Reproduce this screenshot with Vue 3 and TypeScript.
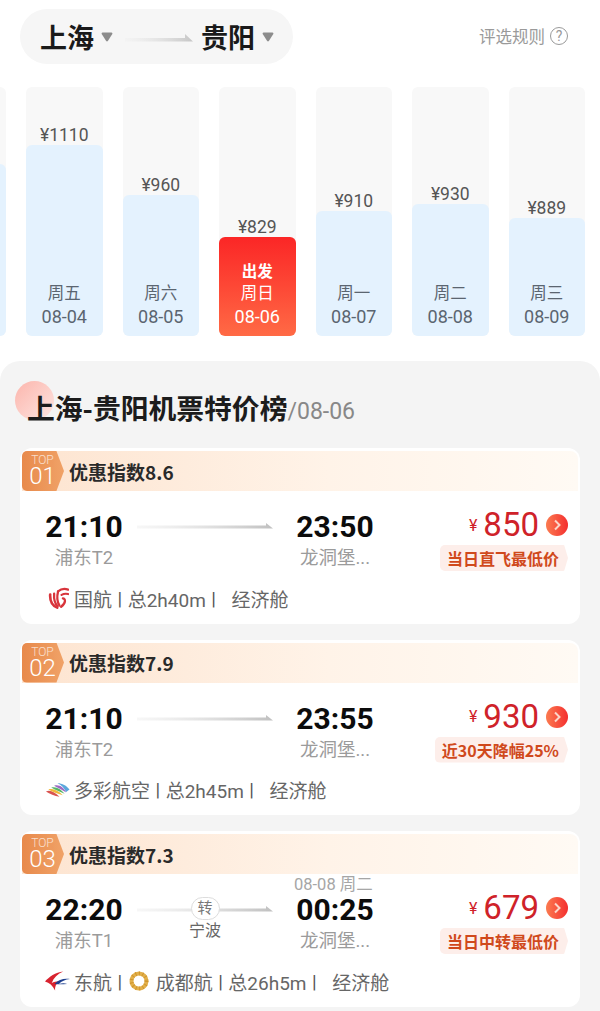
<template>
  <div class="page">
    <!-- 顶部航线 -->
    <header class="top">
      <div class="route">
        <span class="city">上海</span>
        <svg class="caret" viewBox="0 0 12 10"><path d="M1.5 0.5h9q1.4 0 .8 1.5L7 8.8q-1 1.2-2 0L.7 2Q.1.5 1.5.5z" /></svg>
        <svg class="route-arrow" viewBox="0 0 68 8">
          <defs>
            <linearGradient id="routeLine" x1="0" x2="1" y1="0" y2="0">
              <stop offset="0" stop-color="#e8e8e8" stop-opacity="0.2" />
              <stop offset="1" stop-color="#c6c6c6" />
            </linearGradient>
          </defs>
          <path d="M0 4h60V0l8 7.500H0z" fill="url(#routeLine)" />
        </svg>
        <span class="city">贵阳</span>
        <svg class="caret" viewBox="0 0 12 10"><path d="M1.5 0.5h9q1.4 0 .8 1.5L7 8.8q-1 1.2-2 0L.7 2Q.1.5 1.5.5z" /></svg>
      </div>
      <div class="rules">
        <span>评选规则</span>
        <span class="help">?</span>
      </div>
    </header>

    <!-- 日期价格柱状图 -->
    <section class="chart">
      <div v-for="day in days" :key="day.date" class="col">
        <div v-if="day.price" class="price">{{ day.price }}</div>
        <div :class="['bar', { active: day.active }]" :style="{ height: day.height + 'px' }">
          <template v-if="day.week">
            <div v-if="day.active" class="depart">出发</div>
            <div>{{ day.week }}</div>
            <div class="date">{{ day.date }}</div>
          </template>
        </div>
      </div>
    </section>

    <!-- 特价榜 -->
    <section class="panel">
      <span class="dot"></span>
      <h2 class="title">上海-贵阳机票特价榜<span class="title-date">/08-06</span></h2>

      <div class="list">
        <article v-for="item in flights" :key="item.rank" class="card">
          <div class="band">
            <div class="rank">
              <span class="rank-top">TOP</span>
              <span class="rank-num">{{ item.rank }}</span>
            </div>
            <span class="score">优惠指数{{ item.score }}</span>
          </div>

          <div class="main">
            <div class="point">
              <div class="time">{{ item.from }}</div>
              <div class="port">{{ item.fromPort }}</div>
            </div>
            <div class="line">
              <svg class="line-arrow" viewBox="0 0 136 6">
                <defs>
                  <linearGradient :id="'line' + item.rank" x1="0" x2="1" y1="0" y2="0">
                    <stop offset="0" stop-color="#e4e4e4" stop-opacity="0.3" />
                    <stop offset="1" stop-color="#c0c0c0" />
                  </linearGradient>
                </defs>
                <path d="M0 2.500h129V0l7 5.500H0z" :fill="'url(#line' + item.rank + ')'" />
              </svg>
              <template v-if="item.transfer">
                <span class="transfer">转</span>
                <span class="transfer-city">{{ item.transfer }}</span>
              </template>
            </div>
            <div class="point arrive">
              <div v-if="item.nextDay" class="next-day">{{ item.nextDay }}</div>
              <div class="time">{{ item.to }}</div>
              <div class="port">龙洞堡...</div>
            </div>
            <div class="offer">
              <div class="amount">
                <span class="yen">¥</span>
                <span class="value">{{ item.price }}</span>
                <span class="go">
                  <svg viewBox="0 0 22 22"><path d="M9 6.500l4.500 4.500L9 15.500" /></svg>
                </span>
              </div>
              <div class="tag">{{ item.tag }}</div>
            </div>
          </div>

          <div class="meta">
            <svg v-if="item.logo === 'ca'" class="logo ca" viewBox="0 0 24 24">
              <g fill="none" stroke="#d8353c" stroke-linecap="round">
                <path d="M2.500 8c-.5 8 2 12.500 8 15" stroke-width="3" />
                <path d="M7 7c-.5 7 .5 11 4 14.500" stroke-width="2.600" />
                <path d="M11.500 4.500c-1.500 6-1.500 11 1.500 16" stroke-width="2.600" />
                <path d="M11.500 4.500C15 1.500 19 1 23 2.500" stroke-width="2.600" />
                <path d="M15.500 8.500c2.500-1.500 5-1.800 7.500-1" stroke-width="2.400" />
                <path d="M17 12.500c3 0 4 5-2 9.500" stroke-width="2.600" />
              </g>
            </svg>
            <svg v-if="item.logo === 'dc'" class="logo wide" viewBox="0 0 26 16">
              <path d="M1 9.500c5-2 9 1 14 5.500C10 14 5 12 1 9.500z" fill="#d9534f" />
              <path d="M3.500 7.500c5-1.500 10 1 15 6C13 12 8 10 3.500 7.500z" fill="#f0b93a" />
              <path d="M6.500 5.500c5-1.500 10 1.500 14 6.500-5-2-10-4-14-6.500z" fill="#56b56a" />
              <path d="M9.500 3.500c5-1.500 10 1.500 12.500 7C18 8 14 6 9.500 3.500z" fill="#9d6bc4" />
              <path d="M13 1c5 0 9.500 2.500 12.500 6.500L22 10C20 6 17 3 13 1z" fill="#5aa7dc" />
            </svg>
            <svg v-if="item.logo === 'mu'" class="logo wide mu" viewBox="0 0 26 22">
              <path d="M19 1C11 2 4 6.500 0 11.500c4.500 1 8 4.500 10.500 9.500-.5-4 1-7 4-9.500-3 0-5.500.3-7.500 1.500C9 7.500 13 3.500 19 1z" fill="#d8232f" />
              <path d="M10 14c4-4.500 10-6 16-5-5 .5-9 2.500-11.500 5 3-1 6-1 8.500 0-5 .5-9.500.5-13 0z" fill="#1d3f8f" />
            </svg>
            <span>{{ item.airline }}</span>
            <template v-if="item.partner">
              <span class="sep">|</span>
              <svg class="logo ring" viewBox="0 0 20 20">
                <circle cx="10" cy="10" r="7.500" fill="none" stroke="#e2b04a" stroke-width="4" />
                <circle cx="10" cy="10" r="7.500" fill="none" stroke="#d0952c" stroke-width="4" stroke-dasharray="1 2.500" />
              </svg>
              <span>{{ item.partner }}</span>
            </template>
            <span class="sep">|</span>
            <span>总{{ item.duration }}</span>
            <span class="sep">|</span>
            <span class="cabin">经济舱</span>
          </div>
        </article>
      </div>
    </section>
  </div>
</template>

<script setup lang="ts">
interface Day {
  price?: string
  week?: string
  date: string
  height: number
  active?: boolean
}

interface Flight {
  rank: string
  score: string
  from: string
  fromPort: string
  to: string
  nextDay?: string
  transfer?: string
  price: number
  tag: string
  logo: 'ca' | 'dc' | 'mu'
  airline: string
  partner?: string
  duration: string
}

// 最左一列只露出一条边，不显示文字
const days: Day[] = [
  { date: '08-03', height: 172 },
  { price: '¥1110', week: '周五', date: '08-04', height: 191 },
  { price: '¥960', week: '周六', date: '08-05', height: 141 },
  { price: '¥829', week: '周日', date: '08-06', height: 99, active: true },
  { price: '¥910', week: '周一', date: '08-07', height: 125 },
  { price: '¥930', week: '周二', date: '08-08', height: 132 },
  { price: '¥889', week: '周三', date: '08-09', height: 118 }
]

const flights: Flight[] = [
  {
    rank: '01',
    score: '8.6',
    from: '21:10',
    fromPort: '浦东T2',
    to: '23:50',
    price: 850,
    tag: '当日直飞最低价',
    logo: 'ca',
    airline: '国航',
    duration: '2h40m'
  },
  {
    rank: '02',
    score: '7.9',
    from: '21:10',
    fromPort: '浦东T2',
    to: '23:55',
    price: 930,
    tag: '近30天降幅25%',
    logo: 'dc',
    airline: '多彩航空',
    duration: '2h45m'
  },
  {
    rank: '03',
    score: '7.3',
    from: '22:20',
    fromPort: '浦东T1',
    to: '00:25',
    nextDay: '08-08 周二',
    transfer: '宁波',
    price: 679,
    tag: '当日中转最低价',
    logo: 'mu',
    airline: '东航',
    partner: '成都航',
    duration: '26h5m'
  }
]
</script>

<style>
html,
body {
  background: #fff;
}
</style>

<style scoped>
.page {
  width: 600px;
  height: 1011px;
  overflow: hidden;
  background: #fff;
  font-family: "Roboto", "Noto Sans CJK SC", sans-serif;
  color: #222;
}

.top {
  display: flex;
  align-items: center;
  justify-content: space-between;
  padding: 9px 32px 0 20px;
  height: 55px;
}

.route {
  display: flex;
  align-items: center;
  width: 273px;
  height: 55px;
  box-sizing: border-box;
  padding-left: 20px;
  border-radius: 28px;
  background: #f6f6f6;
}

.city {
  font-family: "Noto Sans CJK SC", sans-serif;
  font-size: 27px;
  font-weight: 700;
  line-height: 55px;
  color: #1a1a1a;
}

.caret {
  width: 12px;
  height: 10px;
  margin-left: 7px;
  fill: #8c8c8c;
}

.route-arrow {
  width: 68px;
  height: 8px;
  margin: 3px 8px 0 12px;
}

.rules {
  display: flex;
  align-items: center;
  gap: 5px;
  margin-top: -1px;
  font-size: 16.500px;
  color: #9a9a9a;
}

.help {
  display: flex;
  align-items: center;
  justify-content: center;
  width: 16px;
  height: 16px;
  border: 1px solid #9a9a9a;
  border-radius: 50%;
  font-size: 14px;
  line-height: 1;
}

.chart {
  display: flex;
  gap: 20px;
  height: 249px;
  margin: 23px 0 0 -70.500px;
}

.col {
  display: flex;
  flex: 0 0 76.500px;
  flex-direction: column;
  justify-content: flex-end;
  border-radius: 6px;
  background: #f8f8f8;
}

.price {
  margin-bottom: -2px;
  font-size: 17.500px;
  line-height: 24px;
  text-align: center;
  color: #555;
}

.bar {
  display: flex;
  flex-direction: column;
  justify-content: flex-end;
  flex: none;
  box-sizing: border-box;
  padding-bottom: 8px;
  border-radius: 6px;
  background: #e4f2fe;
  font-size: 16.500px;
  line-height: 22px;
  text-align: center;
  color: #5b6570;
}

.bar.active {
  background: linear-gradient(180deg, #fb2626, #ff6a45);
  color: #fff;
}

.date {
  font-size: 18px;
  line-height: 23px;
}

.depart {
  font-size: 15.500px;
  font-weight: 700;
}

.panel {
  position: relative;
  height: 660px;
  margin-top: 25px;
  border-radius: 20px 20px 0 0;
  background: #f4f4f4;
}

.dot {
  position: absolute;
  top: 20px;
  left: 15px;
  width: 39px;
  height: 39px;
  border-radius: 50%;
  background: linear-gradient(135deg, #fcb5ac, #fde6e2);
}

.title {
  position: relative;
  margin: 0;
  padding: 24px 0 0 27px;
  font-family: "Noto Sans CJK SC", sans-serif;
  font-size: 27.800px;
  font-weight: 700;
  line-height: 44px;
  color: #1c1c1c;
}

.title-date {
  font-family: "Roboto", sans-serif;
  font-size: 23px;
  font-weight: 400;
  color: #888;
}

.list {
  display: flex;
  flex-direction: column;
  gap: 16px;
  margin: 14px 20px 0;
}

.card {
  height: 175.500px;
  box-sizing: border-box;
  padding: 3px 2px 0;
  border-radius: 12px;
  background: #fff;
}

.band {
  display: flex;
  align-items: center;
  height: 40px;
  border-radius: 8px 8px 0 0;
  background: linear-gradient(90deg, #fde4d0, #fff3e8 55%, #fffaf4);
}

.rank {
  display: flex;
  flex-direction: column;
  align-items: center;
  justify-content: center;
  box-sizing: border-box;
  width: 42px;
  height: 40px;
  padding-right: 1px;
  border-radius: 5px 0 0 5px;
  background: linear-gradient(90deg, #e88a4c, #f0a267);
  clip-path: polygon(0 0, 82% 0, 100% 50%, 82% 100%, 0 100%);
  color: #fff;
}

.rank-top {
  font-size: 12px;
  font-weight: 300;
  line-height: 11px;
  opacity: 0.7;
}

.rank-num {
  font-size: 24px;
  font-weight: 300;
  line-height: 21px;
}

.score {
  margin-left: 5px;
  font-family: "Noto Sans CJK SC", sans-serif;
  font-size: 19px;
  font-weight: 700;
  color: #2a2a2a;
}

.main {
  display: flex;
  height: 91px;
  padding-left: 23px;
}

.point {
  position: relative;
  flex: 0 0 78px;
  padding-top: 17px;
  text-align: center;
}

.time {
  font-size: 30px;
  font-weight: 700;
  line-height: 38px;
  color: #0c0c0c;
}

.port {
  font-size: 18.500px;
  line-height: 24px;
  color: #9b9b9b;
}

.line {
  position: relative;
  display: flex;
  flex: 0 0 136px;
  flex-direction: column;
  align-items: center;
  margin: 0 23px 0 14px;
  padding-top: 23px;
}

.line-arrow {
  position: absolute;
  top: 32px;
  left: 0;
  width: 136px;
  height: 6px;
}

.transfer {
  position: relative;
  box-sizing: border-box;
  width: 29px;
  height: 23px;
  border: 1px solid #ddd;
  border-radius: 12px;
  background: #fff;
  font-size: 15px;
  line-height: 21px;
  text-align: center;
  color: #777;
}

.transfer-city {
  font-size: 16px;
  line-height: 22px;
  color: #666;
}

.next-day {
  position: absolute;
  top: 1px;
  left: -2px;
  font-size: 16.500px;
  line-height: 20px;
  white-space: nowrap;
  color: #a6a6a6;
}

.offer {
  display: flex;
  flex: 1;
  flex-direction: column;
  align-items: flex-end;
  padding: 14px 10px 0 0;
}

.amount {
  display: flex;
  align-items: center;
  height: 40px;
}

.yen {
  margin-right: 6px;
  font-size: 16px;
  color: #cf2229;
}

.value {
  font-size: 33px;
  line-height: 40px;
  color: #cf2229;
}

.go {
  display: flex;
  width: 22px;
  height: 22px;
  margin-left: 7px;
  border-radius: 50%;
  background: linear-gradient(90deg, #fb7b50, #f42f2f);
}

.go svg {
  width: 22px;
  height: 22px;
  fill: none;
  stroke: #fbd6c8;
  stroke-width: 2;
}

.tag {
  height: 26px;
  padding: 0 9px 0 7px;
  border-radius: 5px;
  background: #fdeeea;
  clip-path: polygon(0 0, 97% 0, 100% 50%, 97% 100%, 0 100%);
  font-family: "Noto Sans CJK SC", sans-serif;
  font-size: 16px;
  font-weight: 700;
  line-height: 26px;
  color: #d0491c;
}

.meta {
  display: flex;
  align-items: center;
  height: 26px;
  margin-top: 3px;
  padding-left: 23px;
  font-size: 19px;
  color: #666;
}

.logo {
  flex: none;
  width: 24px;
  height: 22px;
  margin-right: 5px;
}

.logo.ca {
  width: 21px;
  margin-left: 3px;
  margin-right: 5px;
}

.logo.ring {
  width: 20px;
  height: 20px;
  margin: 0 7px 0 1px;
}

.logo.wide {
  width: 25px;
  margin-right: 4px;
}

.sep {
  margin: 0 5.500px;
  color: #555;
}

.cabin {
  margin-left: 10px;
}
</style>
